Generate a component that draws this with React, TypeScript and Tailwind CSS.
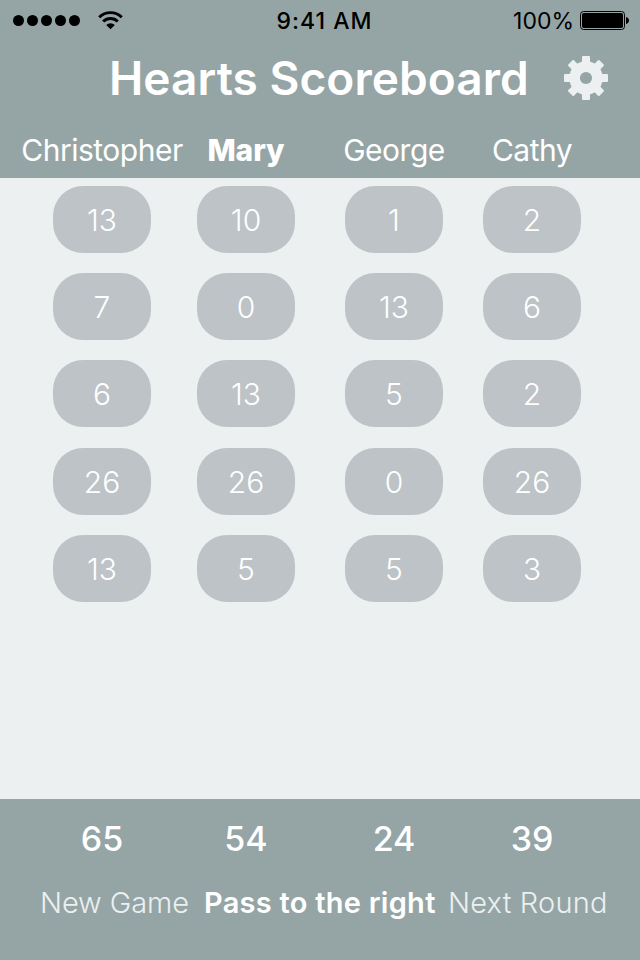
const players = [
  { name: 'Christopher', active: false, total: 65 },
  { name: 'Mary', active: true, total: 54 },
  { name: 'George', active: false, total: 24 },
  { name: 'Cathy', active: false, total: 39 },
];

const rounds = [
  [13, 10, 1, 2],
  [7, 0, 13, 6],
  [6, 13, 5, 2],
  [26, 26, 0, 26],
  [13, 5, 5, 3],
];

const columns = 'grid grid-cols-[144px_144px_152px_124px] pl-[30px] justify-items-center';

function StatusBar() {
  return (
    <div className="grid h-10 grid-cols-[1fr_auto_1fr] items-center text-[23px] leading-[38px] text-black">
      <div className="flex items-center pl-[13px]">
        <div className="flex gap-[3px]">
          {[0, 1, 2, 3, 4].map((i) => (
            <span key={i} className="size-[11px] rounded-full bg-black" />
          ))}
        </div>
        <svg className="ml-[17px] h-[20px] w-[27px]" viewBox="0 0 27 20" fill="none" stroke="#000">
          <path d="M2.2 7.3a16 16 0 0 1 22.6 0" strokeWidth="2.9" />
          <path d="M6.2 11.6a10.3 10.3 0 0 1 14.6 0" strokeWidth="2.9" />
          <path d="M9.2 15.1a6 6 0 0 1 8.6 0L13.5 19.2z" fill="#000" stroke="none" />
        </svg>
      </div>
      <div className="pt-[2px] pl-[9px] font-medium tracking-[1px]">9:41 AM</div>
      <div className="flex items-center justify-end pr-[11px]">
        <span className="pt-[2px]">100%</span>
        <svg className="ml-[6px] h-[20px] w-[49px]" viewBox="0 0 49 20">
          <rect x="0.5" y="1.5" width="44" height="18" rx="3" fill="none" stroke="#000" strokeWidth="1" />
          <rect x="2" y="3" width="41" height="15" rx="1.8" />
          <path d="M46 7c1.8.4 3 1.8 3 3.5s-1.200 3.100-3 3.500z" />
        </svg>
      </div>
    </div>
  );
}

function Gear() {
  return (
    <svg className="size-[44px]" viewBox="-22 -22 44 44" fill="#ecf0f1">
      {[0, 45, 90, 135, 180, 225, 270, 315].map((a) => (
        <path
          key={a}
          d="M-5 -14L-4 -17V-21Q-4 -22 -3 -22H3Q4 -22 4 -21V-17L5 -14z"
          transform={`rotate(${a})`}
        />
      ))}
      <circle r="16.7" />
      <circle r="6.1" fill="#95a5a5" />
    </svg>
  );
}

export default function App() {
  return (
    <div className="flex h-[960px] w-[640px] flex-col overflow-hidden bg-[#ecf0f1] font-['Inter',sans-serif] text-white">
      <header className="h-[178px] bg-[#95a5a5]">
        <StatusBar />
        <div className="flex h-[76px] items-center justify-between pr-8 pl-[109px]">
          <h1 className="text-[46px] font-semibold leading-[76px] tracking-[0.05px] whitespace-nowrap">
            Hearts Scoreboard
          </h1>
          <Gear />
        </div>
        <div className={columns}>
          {players.map((p) => (
            <span
              key={p.name}
              className={
                p.active
                  ? 'text-[30px] leading-[69px] font-extrabold tracking-[-0.1px]'
                  : 'text-[30px] leading-[69px] font-normal tracking-[-0.5px]'
              }
            >
              {p.name}
            </span>
          ))}
        </div>
      </header>

      <main className="flex flex-1 flex-col gap-[20.2px] pt-2">
        {rounds.map((r, i) => (
          <div key={i} className={columns}>
            {r.map((score, j) => (
              <button
                key={j}
                className="h-[67px] w-[98px] rounded-[30px] bg-[#bdc3c7] text-[30px] leading-[68px] font-light"
              >
                {score}
              </button>
            ))}
          </div>
        ))}
      </main>

      <footer className="h-[161px] bg-[#95a5a5]">
        <div className={columns}>
          {players.map((p) => (
            <span key={p.name} className="text-[34px] leading-[80px] font-medium">
              {p.total}
            </span>
          ))}
        </div>
        <div className="flex pl-[40px] text-[29px] leading-[48px] whitespace-nowrap">
          <button className="w-[164px] text-left font-light tracking-[-0.1px] text-[#ecf0f1]">New Game</button>
          <span className="w-[244px] font-semibold tracking-[0.26px]">Pass to the right</span>
          <button className="font-light tracking-[0.2px] text-[#ecf0f1]">Next Round</button>
        </div>
      </footer>
    </div>
  );
}
